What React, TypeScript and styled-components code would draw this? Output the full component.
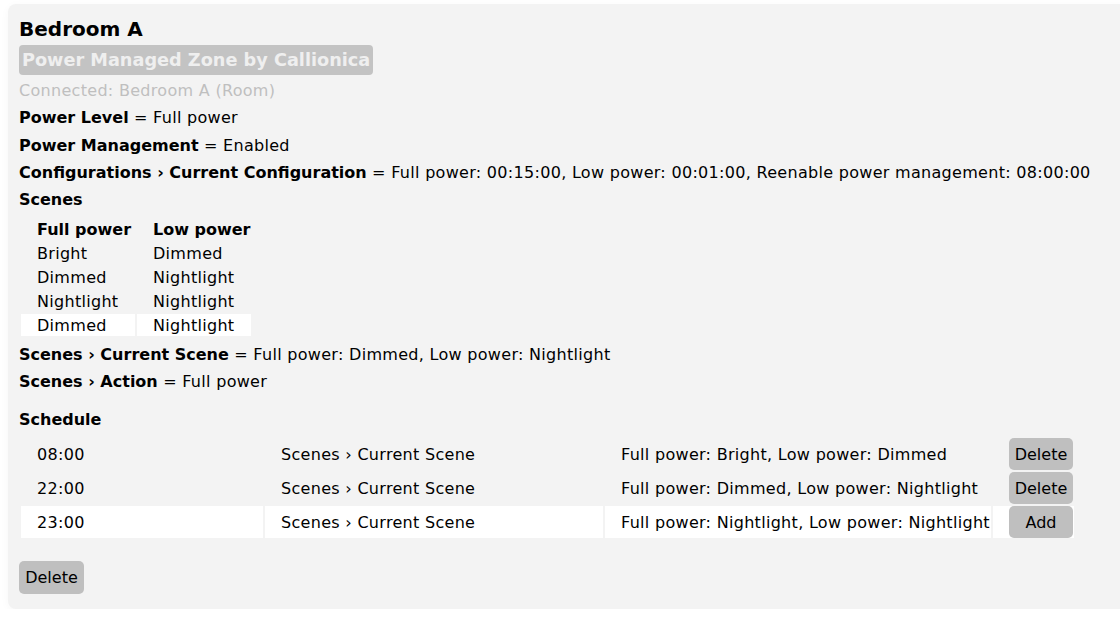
import React from "react";
import styled, { createGlobalStyle } from "styled-components";

const Global = createGlobalStyle`
  html, body { margin: 0; padding: 0; background: #ffffff; overflow: hidden; }
  body { font-family: "DejaVu Sans", Verdana, sans-serif; color: #000; }
`;

const Page = styled.div`
  padding: 4px 0 0 8px;
  width: 1200px;
`;

const Card = styled.section`
  background: #f3f3f3;
  border-radius: 8px;
  box-shadow: 0 2px 10px rgba(0, 0, 0, 0.035);
  padding: 13px 11px 15px 11px;
  width: 1150px;
  box-sizing: border-box;
  display: flex;
  flex-direction: column;
  align-items: flex-start;
`;

const Title = styled.h1`
  margin: 0;
  font-size: 20px;
  line-height: 24px;
  font-weight: 700;
`;

const Badge = styled.div`
  margin-top: 4px;
  background: #c3c3c3;
  color: #efefef;
  font-size: 17.7px;
  font-weight: 700;
  line-height: 30px;
  padding: 0 3px;
  border-radius: 4px;
`;

const Line = styled.div<{ $muted?: boolean; $top?: number }>`
  font-size: 16px;
  line-height: 19px;
  letter-spacing: 0.3px;
  margin-top: ${(p) => p.$top ?? 8}px;
  color: ${(p) => (p.$muted ? "#bfbfbf" : "#000")};
  white-space: nowrap;
`;

const Key = styled.b`
  font-weight: 700;
  letter-spacing: 0;
`;

const Table = styled.table<{ $top: number }>`
  border-spacing: 2px;
  margin: ${(p) => p.$top}px 0 0 0;
  font-size: 16px;
  table-layout: fixed;
`;

const HeadCell = styled.th`
  text-align: left;
  font-weight: 700;
  padding: 0 0 0 16px;
  height: 22px;
  line-height: 19px;
`;

const Cell = styled.td<{ $fresh?: boolean; $h: number; $btn?: boolean }>`
  padding: 0 0 0 16px;
  height: ${(p) => p.$h}px;
  line-height: 19px;
  letter-spacing: 0.3px;
  background: ${(p) => (p.$fresh ? "#ffffff" : "transparent")};
  white-space: nowrap;
  vertical-align: middle;
  ${(p) => (p.$btn ? "padding-right: 1px;" : "")}
`;

const Button = styled.button<{ $w?: number }>`
  font-family: inherit;
  font-size: 16px;
  color: #000;
  background: #bfbfbf;
  border: none;
  border-radius: 5px;
  height: ${(p) => (p.$w ? 33 : 32)}px;
  width: ${(p) => p.$w ?? 64}px;
  padding: 0;
  display: block;
  cursor: pointer;
`;

const scenes = [
  ["Bright", "Dimmed"],
  ["Dimmed", "Nightlight"],
  ["Nightlight", "Nightlight"],
  ["Dimmed", "Nightlight"],
];

const schedule = [
  ["08:00", "Full power: Bright, Low power: Dimmed", "Delete"],
  ["22:00", "Full power: Dimmed, Low power: Nightlight", "Delete"],
  ["23:00", "Full power: Nightlight, Low power: Nightlight", "Add"],
];

export default function App() {
  return (
    <Page>
      <Global />
      <Card>
        <Title>Bedroom A</Title>
        <Badge>Power Managed Zone by Callionica</Badge>
        <Line $muted $top={6}>Connected: Bedroom A (Room)</Line>
        <Line><Key>Power Level</Key> = Full power</Line>
        <Line $top={9}><Key>Power Management</Key> = Enabled</Line>
        <Line><Key>Configurations › Current Configuration</Key> = Full power: 00:15:00, Low power: 00:01:00, Reenable power management: 08:00:00</Line>
        <Line><Key>Scenes</Key></Line>
        <Table $top={7}>
          <colgroup>
            <col style={{ width: 114 }} />
            <col style={{ width: 114 }} />
          </colgroup>
          <thead>
            <tr>
              <HeadCell>Full power</HeadCell>
              <HeadCell>Low power</HeadCell>
            </tr>
          </thead>
          <tbody>
            {scenes.map((r, i) => (
              <tr key={i}>
                <Cell $h={22} $fresh={i === scenes.length - 1}>{r[0]}</Cell>
                <Cell $h={22} $fresh={i === scenes.length - 1}>{r[1]}</Cell>
              </tr>
            ))}
          </tbody>
        </Table>
        <Line $top={7}><Key>Scenes › Current Scene</Key> = Full power: Dimmed, Low power: Nightlight</Line>
        <Line><Key>Scenes › Action</Key> = Full power</Line>
        <Line $top={19}><Key>Schedule</Key></Line>
        <Table $top={7}>
          <colgroup>
            <col style={{ width: 242 }} />
            <col style={{ width: 338 }} />
            <col style={{ width: 386 }} />
            <col style={{ width: 81 }} />
          </colgroup>
          <tbody>
            {schedule.map((r, i) => {
              const fresh = i === schedule.length - 1;
              return (
                <tr key={i}>
                  <Cell $h={32} $fresh={fresh}>{r[0]}</Cell>
                  <Cell $h={32} $fresh={fresh}>Scenes › Current Scene</Cell>
                  <Cell $h={32} $fresh={fresh}>{r[1]}</Cell>
                  <Cell $h={32} $fresh={fresh} $btn>
                    <Button>{r[2]}</Button>
                  </Cell>
                </tr>
              );
            })}
          </tbody>
        </Table>
        <Line $top={21} as="div">
          <Button $w={65}>Delete</Button>
        </Line>
      </Card>
    </Page>
  );
}
